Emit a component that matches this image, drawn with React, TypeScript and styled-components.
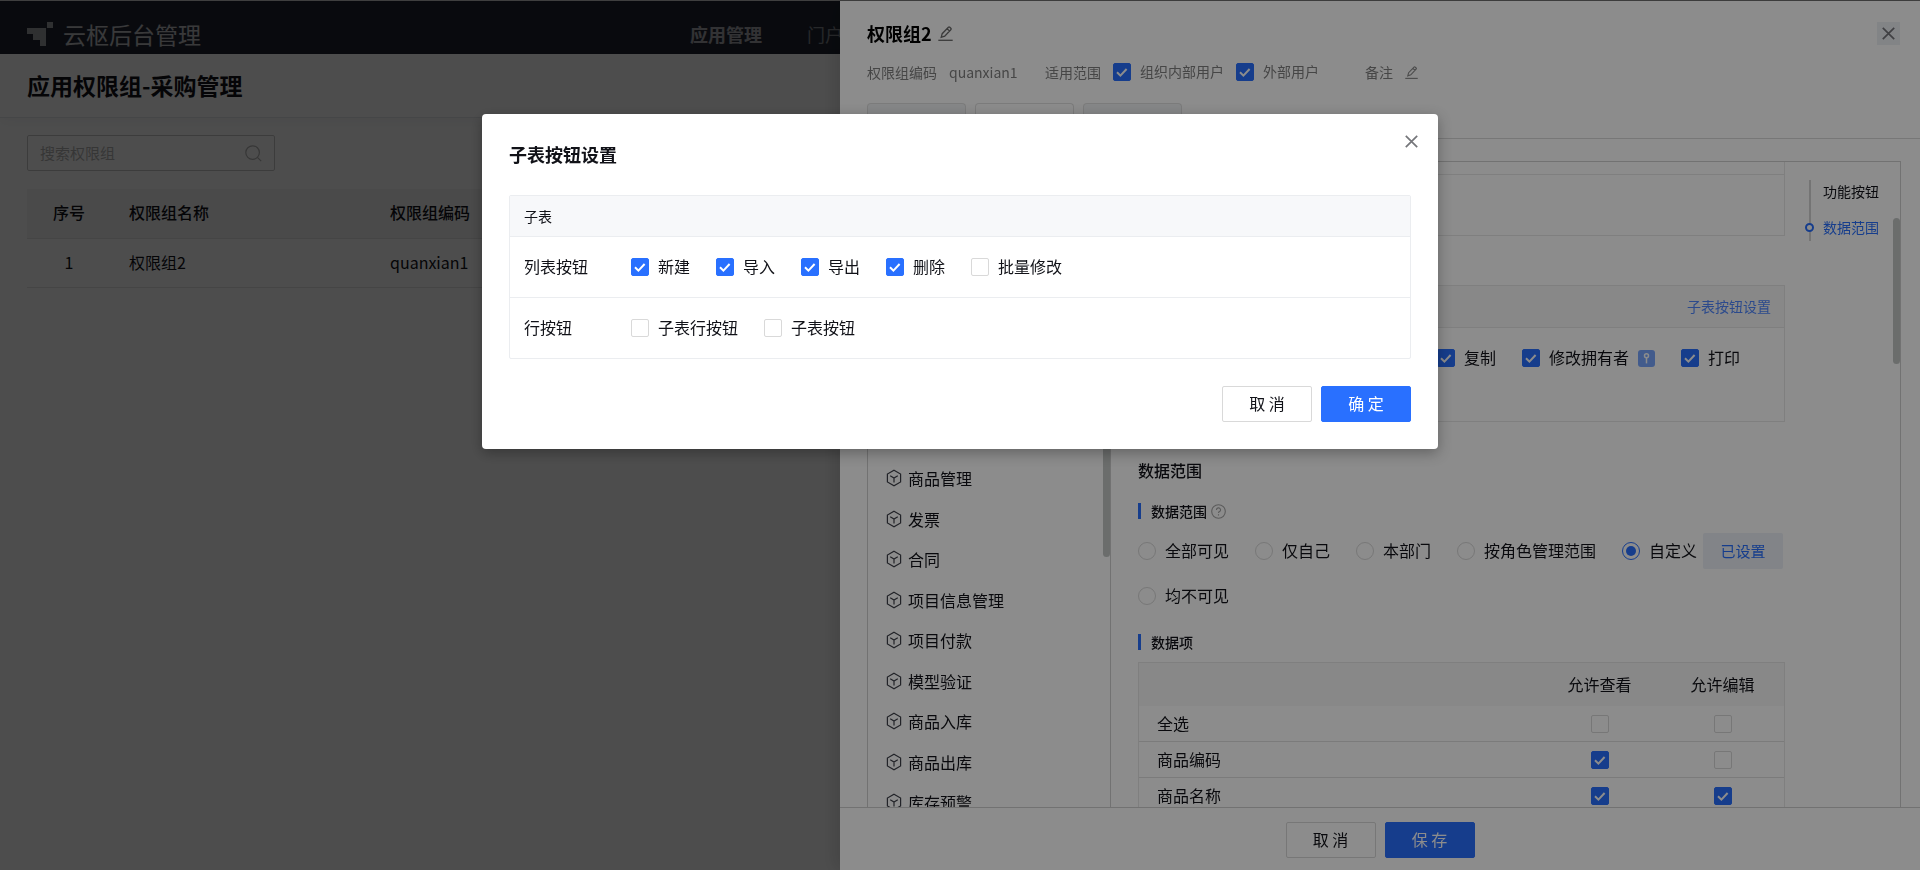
import React, { ReactNode } from "react";
import styled, { createGlobalStyle } from "styled-components";

const GlobalStyle = createGlobalStyle`
  *, *::before, *::after { box-sizing: border-box; }
  html, body, #root { height: 100%; }
  body {
    margin: 0;
    overflow: hidden;
    font-family: "Noto Sans CJK SC", "Microsoft YaHei", sans-serif;
    font-size: 16px;
    line-height: 24px;
    color: #111218;
    background: #fff;
  }
  h1, h2, h3, h4, p, ul { margin: 0; padding: 0; }
  button, input { font-family: inherit; font-size: inherit; }
`;

/* ---------- shared controls ---------- */

const Tick = styled.input.attrs({ type: "checkbox" })`
  appearance: none;
  flex: none;
  display: block;
  width: 18px;
  height: 18px;
  margin: 0;
  border: 1px solid #d9d9d9;
  border-radius: 2px;
  background: #fff;

  &:checked {
    border-color: #2970ff;
    background: #2970ff
      url("data:image/svg+xml,%3Csvg xmlns='http://www.w3.org/2000/svg' viewBox='0 0 16 16'%3E%3Cpath d='M3 8.2l3.4 3.4L12.6 5' fill='none' stroke='%23fff' stroke-width='2'/%3E%3C/svg%3E")
      center / 16px 16px no-repeat;
  }
`;

const Dot = styled.input.attrs({ type: "radio" })`
  appearance: none;
  flex: none;
  display: grid;
  place-items: center;
  width: 18px;
  height: 18px;
  margin: 0;
  border: 1px solid #d9d9d9;
  border-radius: 50%;
  background: #fff;

  &:checked { border-color: #2970ff; }
  &:checked::before {
    content: "";
    width: 10px;
    height: 10px;
    border-radius: 50%;
    background: #2970ff;
  }
`;

const Choice = styled.label<{ $small?: boolean }>`
  display: flex;
  align-items: center;
  gap: 9px;
  white-space: nowrap;
  font-size: ${(p) => (p.$small ? "14px" : "16px")};
`;

const ChoiceText = styled.span`
  padding-bottom: 2px;
`;

const Button = styled.button<{ $primary?: boolean }>`
  width: 90px;
  height: 36px;
  padding: 0 0 2px;
  border: 1px solid ${(p) => (p.$primary ? "#2970ff" : "#d9d9d9")};
  border-radius: 2px;
  background: ${(p) => (p.$primary ? "#2970ff" : "#fff")};
  color: ${(p) => (p.$primary ? "#fff" : "#111218")};
  font-size: 16px;
`;

const IconButton = styled.button<{ $tinted?: boolean }>`
  display: grid;
  place-items: center;
  width: ${(p) => (p.$tinted ? "23px" : "auto")};
  height: ${(p) => (p.$tinted ? "23px" : "auto")};
  padding: 0;
  border: 0;
  background: ${(p) => (p.$tinted ? "#edf0f5" : "none")};
  color: inherit;
`;

const Mask = styled.div`
  position: fixed;
  inset: 0;
  background: rgba(0, 0, 0, 0.45);
`;

/* ---------- icons ---------- */

const CloseIcon = () => (
  <svg width="13" height="13" viewBox="0 0 13 13" fill="none" stroke="#75767a" strokeWidth="1.7">
    <path d="M.8.8l11.4 11.4M12.2.8L.8 12.2" />
  </svg>
);

const PencilIcon = ({ size, color }: { size: number; color: string }) => (
  <svg width={size} height={size} viewBox="0 0 15 15" fill="none" stroke={color} strokeWidth="1.3">
    <path d="M3.2 11.3l1-3.6 6.2-6.4a1 1 0 0 1 1.4 0l1 1a1 1 0 0 1 0 1.4L6.700 10.200zM9.2 2.700l2.400 2.400" />
    <path d="M.3 14.300h14.400" />
  </svg>
);

const CubeIcon = () => (
  <svg width="16" height="18" viewBox="0 0 16 18" fill="none" stroke="#3e4049" strokeWidth="1.2">
    <path d="M8 1.2l6.6 3.9v7.8L8 16.8l-6.6-3.9V5.1z" />
    <path d="M4.2 6.8L8 9l3.8-2.2M8 9v4.4" />
  </svg>
);

const SearchIcon = () => (
  <svg width="17" height="17" viewBox="0 0 17 17" fill="none" stroke="#b4b4b4" strokeWidth="1.2">
    <circle cx="7.6" cy="7.6" r="6.8" />
    <path d="M12.4 12.4l3.8 3.8" />
  </svg>
);

const HelpIcon = () => (
  <svg width="15" height="15" viewBox="0 0 15 15" fill="none" stroke="#a6a6a6" strokeWidth="1.1">
    <circle cx="7.5" cy="7.5" r="6.8" />
    <path d="M5.5 5.9a2 2 0 1 1 3 1.7c-.7.4-1 .8-1 1.5M7.5 10.2v1.2" />
  </svg>
);

const KeyIcon = () => (
  <svg width="17" height="17" viewBox="0 0 17 17">
    <rect width="17" height="17" rx="3" fill="#79a7ff" />
    <circle cx="8.5" cy="5.8" r="2" fill="none" stroke="#fff" strokeWidth="1.5" />
    <path d="M8.5 7.8v5.6" stroke="#fff" strokeWidth="1.5" />
  </svg>
);

const LogoIcon = () => (
  <svg width="26" height="24" viewBox="0 0 26 24" fill="#fff" opacity=".8">
    <path d="M0 6h19v18h-6v-6H6v-6H0z" />
    <path d="M20 0h6v6h-6z" />
  </svg>
);

/* ---------- base page ---------- */

const Page = styled.div`
  height: 100%;
  border-top: 1px solid #d0d0d0;
`;

const TopBar = styled.header`
  display: flex;
  align-items: center;
  height: 53px;
  padding: 12px 27px 0;
  background: #1f2431;
  color: #fff;
`;

const Brand = styled.div`
  display: flex;
  align-items: center;
  gap: 10px;
  flex: 0 0 663px;
  font-size: 23px;
  line-height: 32px;
  opacity: 0.7;
`;

const Nav = styled.nav`
  display: flex;
  gap: 45px;
  opacity: 0.6;
`;

const NavLink = styled.a<{ $active?: boolean }>`
  color: ${(p) => (p.$active ? "#fff" : "#c2c4c8")};
  font-size: 18px;
  font-weight: ${(p) => (p.$active ? 700 : 400)};
  text-decoration: none;
`;

const PageHead = styled.div`
  height: 64px;
  padding: 15px 27px;
  border-bottom: 1px solid #e4e6ea;
  box-shadow: 0 4px 12px rgba(60, 80, 100, 0.06);
`;

const PageTitle = styled.h1`
  font-size: 23px;
  line-height: 32px;
  font-weight: 700;
`;

const PageBody = styled.main`
  padding: 17px 27px;
`;

const SearchBox = styled.label`
  display: flex;
  align-items: center;
  width: 248px;
  height: 36px;
  margin-bottom: 18px;
  padding: 0 12px;
  border: 1px solid #c8c8c8;
  border-radius: 2px;
`;

const SearchInput = styled.input`
  flex: 1;
  min-width: 0;
  padding: 0 0 2px;
  border: 0;
  outline: 0;
  background: none;
  font-size: 15px;
  &::placeholder { color: #b4b4b4; }
`;

const GroupTable = styled.table`
  width: 100%;
  table-layout: fixed;
  border-collapse: collapse;
  text-align: left;

  th, td {
    height: 49px;
    padding: 0 18px 2px;
    border-bottom: 1px solid #e4e4e4;
  }
  th {
    background: #f5f5f5;
    font-weight: 500;
  }
  th:first-child, td:first-child {
    width: 84px;
    text-align: center;
  }
  th:nth-child(2) { width: 261px; }
`;

/* ---------- drawer ---------- */

const Drawer = styled.aside`
  position: fixed;
  top: 1px;
  right: 0;
  bottom: 0;
  display: flex;
  flex-direction: column;
  width: 1080px;
  background: #fff;
  box-shadow: -6px 0 16px rgba(0, 0, 0, 0.12);
`;

const DrawerHead = styled.div`
  display: flex;
  flex-direction: column;
  height: 138px;
  padding: 19px 20px 0 27px;
  border-bottom: 1px solid #d9d9d9;
`;

const TitleRow = styled.div`
  display: flex;
  justify-content: space-between;
  align-items: center;
  margin-bottom: 14px;
`;

const DrawerTitle = styled.h2`
  display: flex;
  align-items: center;
  gap: 6px;
  font-size: 18px;
  line-height: 26px;
  font-weight: 700;
  color: #000;
`;

const MetaRow = styled.div`
  display: flex;
  align-items: center;
  height: 24px;
  margin-bottom: 19px;
  color: #808080;
  font-size: 14px;
`;

const Meta = styled.div<{ $width: number }>`
  display: flex;
  align-items: center;
  gap: 12px;
  width: ${(p) => p.$width}px;
`;

const Tabs = styled.div`
  display: flex;
  gap: 9px;
`;

const Tab = styled.div<{ $active?: boolean }>`
  width: 99px;
  height: 35px;
  border: 1px solid #e0e0e0;
  border-bottom: 0;
  border-radius: 4px 4px 0 0;
  background: ${(p) => (p.$active ? "#fff" : "#f4f6f8")};
`;

const Panel = styled.div`
  position: relative;
  display: flex;
  flex: 1;
  min-height: 0;
  margin: 22px 19px 0 27px;
  border: 1px solid #d0d0d0;
  border-bottom: 0;
  overflow: hidden;
`;

const Thumb = styled.span<{ $top: number; $height: number }>`
  position: absolute;
  top: ${(p) => p.$top}px;
  right: 0;
  width: 7px;
  height: ${(p) => p.$height}px;
  border-radius: 4px;
  background: #c3c6c5;
`;

const ModelPane = styled.nav`
  position: relative;
  flex: 0 0 243px;
  padding: 296px 18px 0;
  border-right: 1px solid #d0d0d0;
`;

const ModelList = styled.ul`
  display: grid;
  grid-auto-rows: 40px 41px;
  list-style: none;
`;

const ModelItem = styled.li`
  display: flex;
  align-items: center;
  gap: 6px;
`;

const Detail = styled.div`
  flex: 1;
  min-width: 0;
  padding: 0 0 0 27px;
`;

const EmptyBox = styled.div`
  height: 74px;
  margin-bottom: 49px;
  padding-top: 12px;
  border: 1px solid #e8e8e8;
  border-top: 0;
  &::before {
    content: "";
    display: block;
    border-top: 1px solid #e8e8e8;
  }
`;

const PermissionBox = styled.section`
  height: 137px;
  margin-bottom: 36px;
  border: 1px solid #e8e8e8;
`;

const BoxHead = styled.div`
  display: flex;
  align-items: center;
  justify-content: flex-end;
  height: 42px;
  padding: 0 13px 2px;
  border-bottom: 1px solid #e8e8e8;
  background: #f7f7f7;
`;

const BoxLink = styled.a`
  color: #5088ff;
  font-size: 14px;
  text-decoration: none;
`;

const BoxRow = styled.div`
  display: flex;
  align-items: center;
  justify-content: flex-end;
  gap: 26px;
  height: 60px;
  padding-right: 44px;
`;

const Heading = styled.h3`
  margin-bottom: 17px;
  font-size: 16px;
  font-weight: 500;
`;

const SubHeading = styled.h4`
  display: flex;
  align-items: center;
  gap: 4px;
  font-size: 14px;
  font-weight: 500;
  &::before {
    content: "";
    width: 3px;
    height: 16px;
    margin-right: 6px;
    background: #2970ff;
  }
`;

const ScopeRow = styled.div`
  display: flex;
  flex-wrap: wrap;
  align-items: center;
  gap: 9px 26px;
  margin: 10px 0 16px;
  & > * { min-height: 36px; }
`;

const Custom = styled.div`
  display: flex;
  align-items: center;
  gap: 6px;
`;

const SetButton = styled.button`
  width: 80px;
  height: 36px;
  padding: 0 0 2px;
  border: 0;
  border-radius: 2px;
  background: #edf1f7;
  color: #2970ff;
  font-size: 15px;
`;

const FieldTable = styled.table`
  width: 100%;
  margin-top: 8px;
  table-layout: fixed;
  border-collapse: separate;
  border-spacing: 0;
  border: 1px solid #e8e8e8;
  text-align: left;

  th {
    height: 43px;
    padding: 0 0 2px;
    background: #f7f7f7;
    font-weight: 400;
  }
  td {
    height: 36px;
    padding: 0 0 2px 18px;
    border-bottom: 1px solid #e0e0e0;
  }
  th:nth-child(n + 2) {
    width: 123px;
    text-align: center;
  }
  td:nth-child(n + 2) { padding: 0; }
  input { margin: 0 auto; }
`;

const AnchorPane = styled.nav`
  flex: 0 0 115px;
  padding: 18px 0 0 24px;
`;

const AnchorList = styled.ul`
  display: flex;
  flex-direction: column;
  gap: 14px;
  height: 61px;
  padding-left: 12px;
  border-left: 2px solid #d4d4d4;
  list-style: none;
`;

const AnchorLink = styled.a<{ $active?: boolean }>`
  position: relative;
  display: block;
  color: ${(p) => (p.$active ? "#2970ff" : "#111218")};
  font-size: 14px;
  line-height: 22px;
  text-decoration: none;

  &::before {
    content: "";
    display: ${(p) => (p.$active ? "block" : "none")};
    position: absolute;
    top: 7px;
    left: -18px;
    width: 9px;
    height: 9px;
    border: 2px solid #2970ff;
    border-radius: 50%;
    background: #fff;
  }
`;

const DrawerFoot = styled.footer`
  display: flex;
  justify-content: center;
  gap: 9px;
  height: 63px;
  padding-top: 14px;
  border-top: 1px solid #d0d0d0;
`;

/* ---------- dialog ---------- */

const Dialog = styled.section`
  position: fixed;
  top: 114px;
  left: 50%;
  width: 956px;
  padding: 26px 27px 27px;
  transform: translateX(-50%);
  border-radius: 4px;
  background: #fff;
  box-shadow: 0 4px 14px rgba(0, 0, 0, 0.3);
`;

const DialogTitle = styled.h2`
  margin-bottom: 27px;
  font-size: 18px;
  line-height: 28px;
  font-weight: 700;
`;

const DialogClose = styled.div`
  position: absolute;
  top: 21px;
  right: 20px;
`;

const Group = styled.div`
  margin-bottom: 27px;
  border: 1px solid #ebedf0;
  border-radius: 2px;
`;

const GroupHead = styled.div`
  padding: 8px 14px;
  background: #f7f8fa;
  font-size: 14px;
`;

const GroupRow = styled.div`
  display: flex;
  align-items: center;
  gap: 26px;
  height: 61px;
  padding: 0 14px;
  border-top: 1px solid #ebedf0;
`;

const RowName = styled.span`
  width: 81px;
  padding-bottom: 2px;
`;

const DialogFoot = styled.footer`
  display: flex;
  justify-content: flex-end;
  gap: 9px;
`;

/* ---------- data ---------- */

const models = ["商品管理", "发票", "合同", "项目信息管理", "项目付款", "模型验证", "商品入库", "商品出库", "库存预警"];

const fields = [
  { name: "全选", view: false, edit: false },
  { name: "商品编码", view: true, edit: false },
  { name: "商品名称", view: true, edit: true },
];

const dialogRows = [
  {
    name: "列表按钮",
    options: [
      { label: "新建", on: true },
      { label: "导入", on: true },
      { label: "导出", on: true },
      { label: "删除", on: true },
      { label: "批量修改", on: false },
    ],
  },
  {
    name: "行按钮",
    options: [
      { label: "子表行按钮", on: false },
      { label: "子表按钮", on: false },
    ],
  },
];

type TickLabelProps = { on?: boolean; small?: boolean; badge?: ReactNode; children: ReactNode };

const TickLabel = ({ on, small, badge, children }: TickLabelProps) => (
  <Choice $small={small}>
    <Tick defaultChecked={on} />
    <ChoiceText>{children}</ChoiceText>
    {badge}
  </Choice>
);

const ScopeOption = ({ on, children }: { on?: boolean; children: ReactNode }) => (
  <Choice>
    <Dot name="scope" defaultChecked={on} />
    <ChoiceText>{children}</ChoiceText>
  </Choice>
);

export default function App() {
  return (
    <>
      <GlobalStyle />
      <Page>
        <TopBar>
          <Brand>
            <LogoIcon />
            云枢后台管理
          </Brand>
          <Nav>
            <NavLink href="#apps" $active>应用管理</NavLink>
            <NavLink href="#portal">门户</NavLink>
          </Nav>
        </TopBar>
        <PageHead>
          <PageTitle>应用权限组-采购管理</PageTitle>
        </PageHead>
        <PageBody>
          <SearchBox>
            <SearchInput placeholder="搜索权限组" />
            <SearchIcon />
          </SearchBox>
          <GroupTable>
            <thead>
              <tr><th>序号</th><th>权限组名称</th><th>权限组编码</th></tr>
            </thead>
            <tbody>
              <tr><td>1</td><td>权限组2</td><td>quanxian1</td></tr>
            </tbody>
          </GroupTable>
        </PageBody>
      </Page>

      <Mask />
      <Drawer>
        <DrawerHead>
          <TitleRow>
            <DrawerTitle>
              权限组2
              <IconButton aria-label="编辑"><PencilIcon size={15} color="#6b6b6b" /></IconButton>
            </DrawerTitle>
            <IconButton $tinted aria-label="关闭"><CloseIcon /></IconButton>
          </TitleRow>
          <MetaRow>
            <Meta $width={178}><span>权限组编码</span><span>quanxian1</span></Meta>
            <Meta $width={320}>
              <span>适用范围</span>
              <TickLabel on small>组织内部用户</TickLabel>
              <TickLabel on small>外部用户</TickLabel>
            </Meta>
            <Meta $width={80}>
              <span>备注</span>
              <IconButton aria-label="编辑备注"><PencilIcon size={13} color="#8a8a8a" /></IconButton>
            </Meta>
          </MetaRow>
          <Tabs><Tab /><Tab $active /><Tab /></Tabs>
        </DrawerHead>

        <Panel>
          <ModelPane>
            <ModelList>
              {models.map((m) => (
                <ModelItem key={m}><CubeIcon />{m}</ModelItem>
              ))}
            </ModelList>
            <Thumb $top={180} $height={215} />
          </ModelPane>
          <Detail>
            <EmptyBox />
            <PermissionBox>
              <BoxHead><BoxLink href="#sub">子表按钮设置</BoxLink></BoxHead>
              <BoxRow>
                <TickLabel on>复制</TickLabel>
                <TickLabel on badge={<KeyIcon />}>修改拥有者</TickLabel>
                <TickLabel on>打印</TickLabel>
              </BoxRow>
            </PermissionBox>
            <Heading>数据范围</Heading>
            <SubHeading>数据范围<HelpIcon /></SubHeading>
            <ScopeRow>
              <ScopeOption>全部可见</ScopeOption>
              <ScopeOption>仅自己</ScopeOption>
              <ScopeOption>本部门</ScopeOption>
              <ScopeOption>按角色管理范围</ScopeOption>
              <Custom>
                <ScopeOption on>自定义</ScopeOption>
                <SetButton>已设置</SetButton>
              </Custom>
              <ScopeOption>均不可见</ScopeOption>
            </ScopeRow>
            <SubHeading>数据项</SubHeading>
            <FieldTable>
              <thead>
                <tr><th /><th>允许查看</th><th>允许编辑</th></tr>
              </thead>
              <tbody>
                {fields.map((f) => (
                  <tr key={f.name}>
                    <td>{f.name}</td>
                    <td><Tick defaultChecked={f.view} aria-label={`${f.name} 允许查看`} /></td>
                    <td><Tick defaultChecked={f.edit} aria-label={`${f.name} 允许编辑`} /></td>
                  </tr>
                ))}
              </tbody>
            </FieldTable>
          </Detail>
          <AnchorPane>
            <AnchorList>
              <li><AnchorLink href="#functions">功能按钮</AnchorLink></li>
              <li><AnchorLink href="#scope" $active>数据范围</AnchorLink></li>
            </AnchorList>
          </AnchorPane>
          <Thumb $top={56} $height={146} />
        </Panel>
        <DrawerFoot>
          <Button>取 消</Button>
          <Button $primary>保 存</Button>
        </DrawerFoot>
      </Drawer>

      <Mask />
      <Dialog role="dialog" aria-labelledby="dialog-title">
        <DialogTitle id="dialog-title">子表按钮设置</DialogTitle>
        <DialogClose>
          <IconButton aria-label="关闭"><CloseIcon /></IconButton>
        </DialogClose>
        <Group>
          <GroupHead>子表</GroupHead>
          {dialogRows.map((row) => (
            <GroupRow key={row.name}>
              <RowName>{row.name}</RowName>
              {row.options.map((o) => (
                <TickLabel key={o.label} on={o.on}>{o.label}</TickLabel>
              ))}
            </GroupRow>
          ))}
        </Group>
        <DialogFoot>
          <Button>取 消</Button>
          <Button $primary>确 定</Button>
        </DialogFoot>
      </Dialog>
    </>
  );
}
